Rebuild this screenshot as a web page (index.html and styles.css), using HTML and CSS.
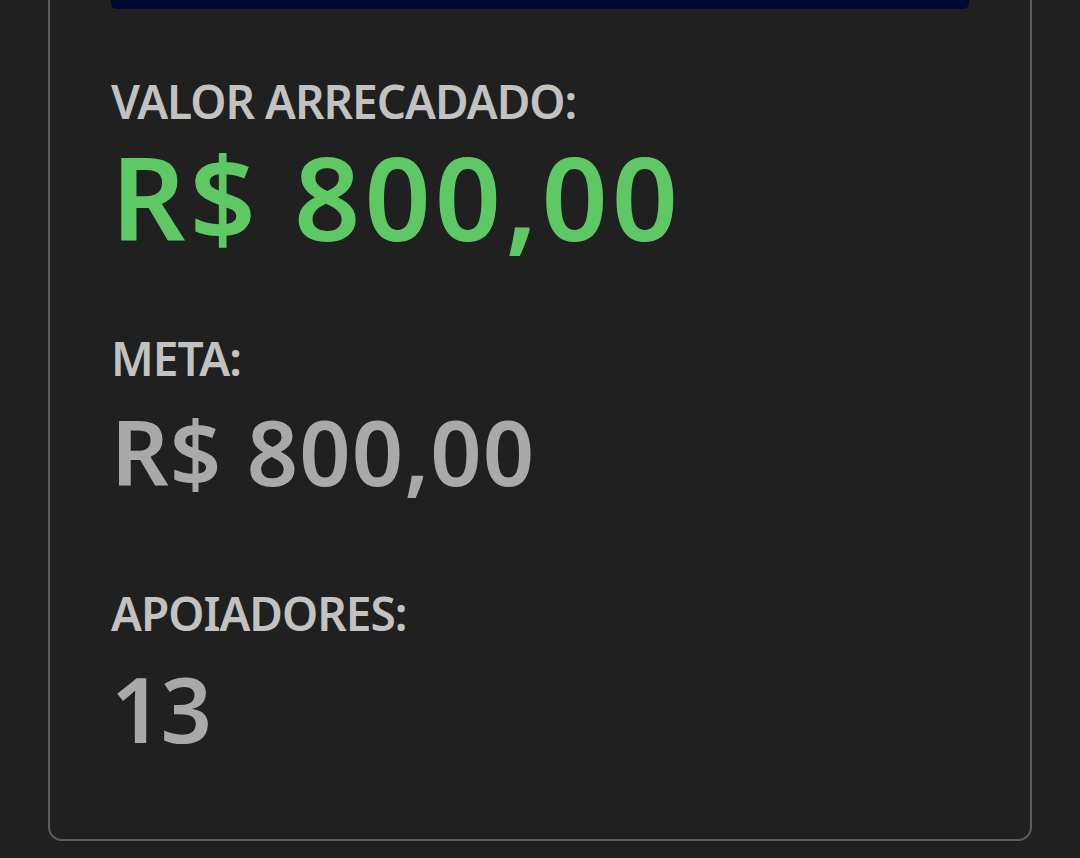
FILE: index.html
```html
<!DOCTYPE html>
<html lang="pt-BR">
<head>
    <meta charset="UTF-8">
    <meta name="viewport" content="width=device-width, initial-scale=1.0">
    <title>Campanha</title>
    <link rel="stylesheet" href="styles.css">
</head>
<body>

<div class="card">
    <div class="progress-bar"></div>

    <div class="stat">
        <div class="stat-label">VALOR ARRECADADO:</div>
        <div class="stat-value raised">R$ 800,00</div>
    </div>

    <div class="stat">
        <div class="stat-label">META:</div>
        <div class="stat-value">R$ 800,00</div>
    </div>

    <div class="stat">
        <div class="stat-label">APOIADORES:</div>
        <div class="stat-value count">13</div>
    </div>
</div>

</body>
</html>
```

FILE: styles.css
```css
html, body {
    margin: 0;
    padding: 0;
}
body {
    font-family: 'Noto Sans', 'Open Sans', sans-serif;
    background-color: #202020;
    height: 858px;
    overflow: hidden;
}
.card {
    margin: -60px 48px 0;
    padding: 20px 61px 68px;
    border: 2px solid #5c5c5c;
    border-radius: 14px;
}
.progress-bar {
    height: 47px;
    background-color: #000833;
    border-radius: 6px;
}
.stat {
    margin-top: 73px;
}
.progress-bar + .stat {
    margin-top: 66px;
}
.stat-label {
    font-size: 46px;
    line-height: 52px;
    font-weight: 600;
    color: #c2c2c2;
    letter-spacing: -1px;
    margin-bottom: 4px;
}
.stat-value {
    font-size: 90px;
    line-height: 126px;
    font-weight: 600;
    color: #a9a9a9;
    letter-spacing: 1px;
}
.stat-value.raised {
    font-size: 116px;
    line-height: 126px;
    margin-top: 6px;
    letter-spacing: 4px;
    color: #5ec865;
}
.stat-value.count {
    margin-top: 6px;
    letter-spacing: -2px;
}
```
